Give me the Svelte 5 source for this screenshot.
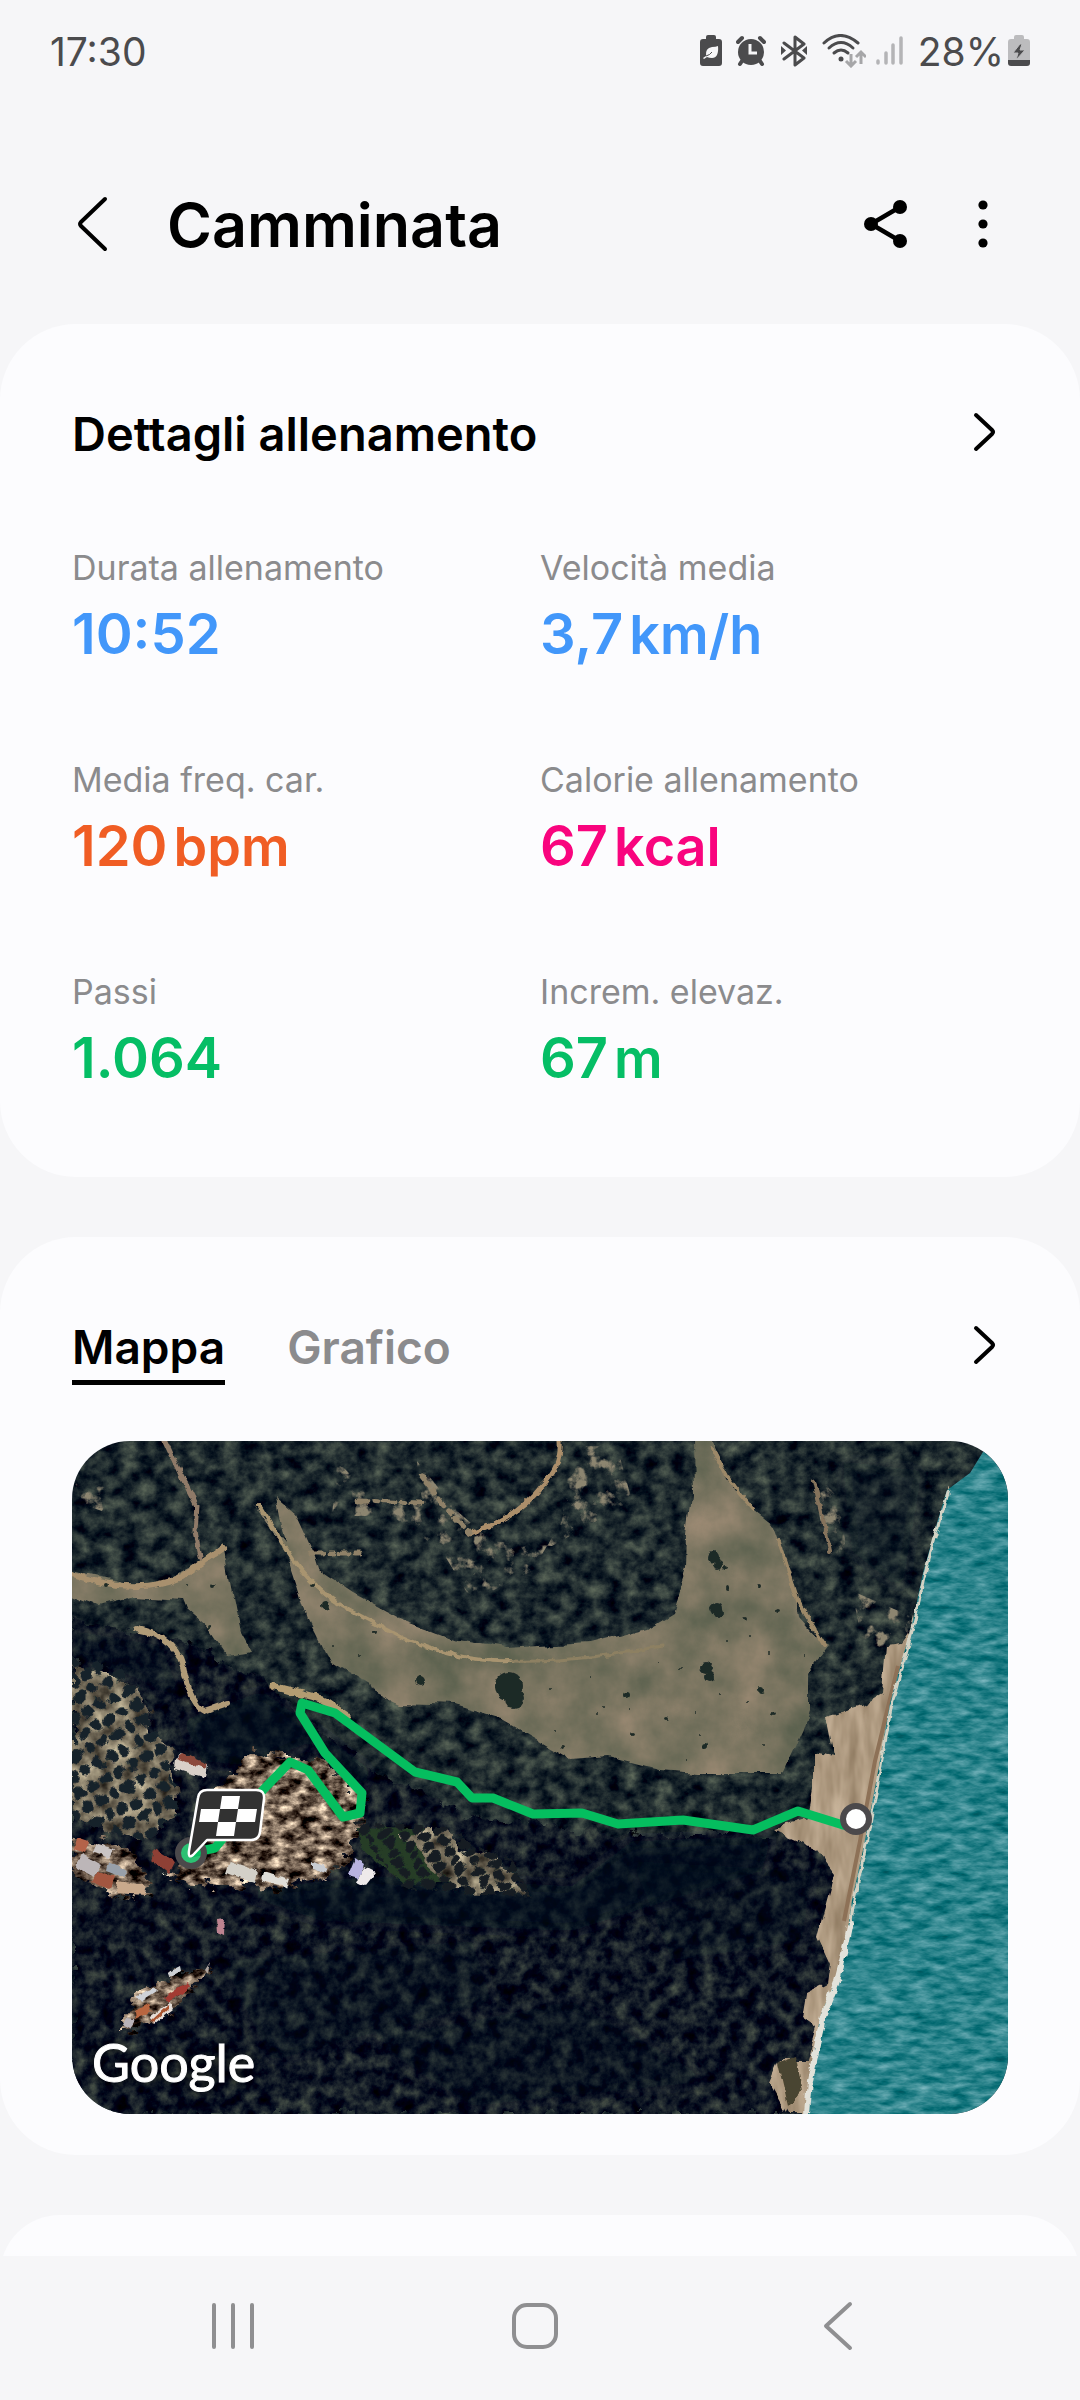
<script lang="ts">
  type Stat = { label: string; value: string; unit?: string; tone: string };

  const stats: Stat[] = [
    { label: 'Durata allenamento', value: '10:52', tone: 'blue' },
    { label: 'Velocità media', value: '3,7', unit: 'km/h', tone: 'blue' },
    { label: 'Media freq. car.', value: '120', unit: 'bpm', tone: 'orange' },
    { label: 'Calorie allenamento', value: '67', unit: 'kcal', tone: 'pink' },
    { label: 'Passi', value: '1.064', tone: 'green' },
    { label: 'Increm. elevaz.', value: '67', unit: 'm', tone: 'green' }
  ];

  const tabs = ['Mappa', 'Grafico'];
  let active = $state('Mappa');

  const route =
    '119,412 143,407 172,372 191,349 218,321 236,329 271,376 288,372 290,352 253,312 228,272 230,262 263,272 343,331 385,341 400,357 421,357 461,373 510,372 546,383 611,379 681,389 726,370 784,388';

  // dark shrubs scattered over the meadow: x, y, radius
  const shrubs = [
    [437, 245, 14], [442, 258, 10], [348, 239, 5], [642, 116, 6], [646, 124, 5],
    [644, 167, 6], [647, 172, 5], [634, 227, 6], [638, 236, 5], [654, 127, 2],
    [632, 305, 3], [554, 254, 3], [689, 249, 3], [560, 293, 2], [706, 170, 2],
    [595, 278, 2], [687, 145, 2], [655, 147, 2], [672, 178, 2], [701, 273, 2],
    [490, 306, 2], [586, 220, 1], [609, 228, 1], [518, 235, 1], [532, 266, 1],
    [525, 273, 1], [558, 269, 1], [624, 272, 1], [648, 252, 1], [676, 261, 1],
    [478, 246, 1], [483, 289, 1], [693, 304, 1], [613, 320, 1], [628, 295, 1],
    [733, 215, 1], [697, 211, 1], [679, 194, 1], [656, 200, 1], [241, 144, 2],
    [253, 164, 4], [302, 191, 2], [262, 205, 1], [288, 215, 1], [141, 145, 2],
    [33, 144, 2], [115, 144, 1], [138, 187, 2]
  ];

  // small roofs: points and colour
  const roofs = [
    ['103,317 110,312 136,324 134,337 102,328', '#d9d0c8'],
    ['104,317 111,312 136,323 134,328', '#8b4a3a'],
    ['5,396 17,400 12,412 3,408', '#b4634a'],
    ['23,402 42,408 37,417 20,411', '#c9c4c4'],
    ['10,413 30,424 22,436 4,426', '#bcb6b8'],
    ['36,420 56,429 52,437 34,430', '#98a0aa'],
    ['26,430 43,436 38,448 20,441', '#a2563f'],
    ['46,440 70,444 73,454 44,452', '#c9a98c'],
    ['82,408 103,421 97,433 79,419', '#8e3f34'],
    ['158,420 186,430 183,442 154,432', '#d3d0c8'],
    ['192,430 217,438 214,446 190,440', '#e0ded8'],
    ['240,420 257,427 254,432 240,428', '#c8ccd2'],
    ['283,417 292,423 287,437 276,434', '#b7b3df'],
    ['292,425 304,431 293,445 285,441', '#eeeaea'],
    ['144,478 153,477 152,494 145,491', '#bd8390'],
    ['93,556 116,541 118,546 97,561', '#a33b33'],
    ['63,570 77,562 80,570 64,578', '#b9663f'],
    ['77,577 98,561 101,568 82,583', '#e4dcd6'],
    ['79,580 96,564 97,567 81,582', '#a8532f'],
    ['65,556 82,546 85,550 68,561', '#cfd2d8'],
    ['96,531 108,525 109,530 98,536', '#cdcfd2'],
    ['55,577 64,578 58,587 52,584', '#b9b3b8'],
    ['133,528 138,520 136,532', '#b0a6a0']
  ];
</script>

{#snippet chevron()}
  <svg class="chevron" width="26" height="44" viewBox="0 0 26 44" aria-hidden="true">
    <path d="M4 5 L20 20 Q22 22 20 24 L4 39" />
  </svg>
{/snippet}

<div class="screen">
  <div class="status">
    <span>17:30</span>
    <div class="status-icons">
      <svg width="22" height="32" viewBox="0 0 22 32" aria-hidden="true">
        <path fill="#4b4b4d" d="M8 0h6q2 0 2 2v2h3q3 0 3 3v21q0 3-3 3H3q-3 0-3-3V7q0-3 3-3h3V2q0-2 2-2z" />
        <path fill="#f6f6f8" d="M18 11q1 12-6 12-3 0-5-1l-3 2-1-1 3-2q-1-8 6-9 4 0 6-1z" />
        <path fill="none" stroke="#4b4b4d" stroke-width="1" d="M6 21q4-1 6-4" />
      </svg>
      <svg width="30" height="32" viewBox="0 0 30 32" aria-hidden="true">
        <circle cx="15" cy="17" r="13" fill="#4b4b4d" />
        <path fill="none" stroke="#4b4b4d" stroke-width="4" stroke-linecap="round" d="M2 7l4-4M28 7l-4-4M6 26l-2 3M24 26l2 3" />
        <path fill="none" stroke="#f6f6f8" stroke-width="3" d="M14 9v9h7" />
      </svg>
      <svg width="28" height="32" viewBox="0 0 28 32" aria-hidden="true">
        <path fill="none" stroke="#4b4b4d" stroke-width="3" stroke-linejoin="round" stroke-linecap="round" d="M4 8l20 15-9 7V2l9 7L4 24" />
        <path fill="#4b4b4d" d="M1 11l5 4.500-5 4.500zM27 11l-5 4.500 5 4.500z" />
      </svg>
      <div class="signals">
        <svg width="44" height="34" viewBox="0 0 44 34" aria-hidden="true">
          <g fill="none" stroke="#4b4b4d" stroke-width="3" stroke-linecap="round">
            <path d="M2 9Q18-6 36 9" />
            <path d="M7 14Q19 3 31 14" />
            <path d="M12 19Q19 13 26 19" />
          </g>
          <circle cx="19" cy="25" r="2.500" fill="#4b4b4d" />
          <path fill="none" stroke="#a6a6a8" stroke-width="3" d="M29 20v11M24 27l5 5 5-5M39 30V19M34 23l5-5 5 5" />
        </svg>
        <svg width="28" height="32" viewBox="0 0 28 32" aria-hidden="true">
          <path stroke="#b4b4b6" stroke-width="3.500" stroke-linecap="round" d="M2 26v2M10 18v10M17 10v18M25 3v25" />
        </svg>
      </div>
      <div class="battery">
        <span>28%</span>
        <svg width="22" height="32" viewBox="0 0 22 32" aria-hidden="true">
          <path fill="#bcbcbe" d="M8 0h6q2 0 2 2v2h3q3 0 3 3v18H0V7q0-3 3-3h3V2q0-2 2-2z" />
          <path fill="#4b4b4d" d="M0 25h22v3q0 3-3 3H3q-3 0-3-3z" />
          <path fill="#4b4b4d" stroke="#bcbcbe" stroke-width="1" d="M12 9l-7 9h5l-2 7 9-10h-5l2-6z" />
        </svg>
      </div>
    </div>
  </div>

  <header>
    <button class="icon" aria-label="Indietro">
      <svg width="32" height="60" viewBox="0 0 32 60" fill="none" stroke="#000" stroke-width="4" stroke-linecap="round">
        <path d="M28 5L4 28Q2 30 4 32L28 55" />
      </svg>
    </button>
    <h1>Camminata</h1>
    <button class="icon share" aria-label="Condividi">
      <svg width="44" height="50" viewBox="0 0 44 50">
        <path d="M36 8L7 25l29 17" fill="none" stroke="#000" stroke-width="4.500" />
        <circle cx="36" cy="8" r="7" /><circle cx="7" cy="25" r="7" /><circle cx="36" cy="42" r="7" />
      </svg>
    </button>
    <button class="icon" aria-label="Altre opzioni">
      <svg width="10" height="50" viewBox="0 0 10 50">
        <circle cx="5" cy="6" r="4.600" /><circle cx="5" cy="25" r="4.600" /><circle cx="5" cy="44" r="4.600" />
      </svg>
    </button>
  </header>

  <main>
    <section class="card details">
      <div class="card-head">
        <h2>Dettagli allenamento</h2>
        <button class="icon" aria-label="Apri dettagli">{@render chevron()}</button>
      </div>
      <dl>
        {#each stats as s}
          <div>
            <dt>{s.label}</dt>
            <dd class={s.tone}>{s.value}{#if s.unit}<span class="unit">{s.unit}</span>{/if}</dd>
          </div>
        {/each}
      </dl>
    </section>

    <section class="card map-card">
      <div class="card-head">
        <div class="tabs" role="tablist">
          {#each tabs as tab}
            <button role="tab" aria-selected={active === tab} class:active={active === tab} onclick={() => (active = tab)}>{tab}</button>
          {/each}
        </div>
        <button class="icon" aria-label="Apri mappa">{@render chevron()}</button>
      </div>

      <div class="map">
        <svg viewBox="0 0 936 673" role="img" aria-label="Percorso della camminata">
          <defs>
            <filter id="woods" x="0" y="0" width="1" height="1" color-interpolation-filters="sRGB">
              <feTurbulence type="fractalNoise" baseFrequency="0.06 0.07" numOctaves="5" seed="4" />
              <feColorMatrix values="0.6 0 0 0 -0.18  0.6 0 0 0 -0.135  0.42 0 0 0 -0.03  0 0 0 0 1" />
            </filter>
            <filter id="darkwoods" x="-0.05" y="-0.05" width="1.1" height="1.1" color-interpolation-filters="sRGB">
              <feTurbulence type="fractalNoise" baseFrequency="0.07" numOctaves="5" seed="9" result="n" />
              <feColorMatrix in="n" values="0.6 0 0 0 -0.24  0.62 0 0 0 -0.22  0.38 0 0 0 -0.05  0 0 0 0 1" result="c" />
              <feDisplacementMap in="SourceGraphic" in2="n" scale="22" xChannelSelector="R" yChannelSelector="G" result="s" />
              <feComposite in="c" in2="s" operator="in" />
            </filter>
            <filter id="grass" x="-0.05" y="-0.05" width="1.1" height="1.1" color-interpolation-filters="sRGB">
              <feTurbulence type="fractalNoise" baseFrequency="0.02" numOctaves="6" seed="3" result="n" />
              <feColorMatrix in="n" values="0.35 0 0 0 0.3  0.22 0 0 0 0.345  0.2 0 0 0 0.275  0 0 0 0 1" result="c" />
              <feDisplacementMap in="SourceGraphic" in2="n" scale="16" xChannelSelector="R" yChannelSelector="G" result="s" />
              <feComposite in="c" in2="s" operator="in" />
            </filter>
            <filter id="sand" x="-0.05" y="-0.05" width="1.1" height="1.1" color-interpolation-filters="sRGB">
              <feTurbulence type="fractalNoise" baseFrequency="0.08 0.02" numOctaves="3" seed="5" result="n" />
              <feColorMatrix in="n" values="0.3 0 0 0 0.53  0.3 0 0 0 0.45  0.3 0 0 0 0.35  0 0 0 0 1" result="c" />
              <feDisplacementMap in="SourceGraphic" in2="n" scale="10" xChannelSelector="R" yChannelSelector="G" result="s" />
              <feComposite in="c" in2="s" operator="in" />
            </filter>
            <filter id="water" x="0" y="0" width="1" height="1" color-interpolation-filters="sRGB">
              <feTurbulence type="fractalNoise" baseFrequency="0.05 0.14" numOctaves="4" seed="7" result="n" />
              <feColorMatrix in="n" values="0.7 0 0 0 -0.18  0.45 0 0 0 0.29  0.45 0 0 0 0.32  0 0 0 0 1" />
              <feComposite in2="SourceGraphic" operator="in" />
            </filter>
            <filter id="village" x="-0.05" y="-0.05" width="1.1" height="1.1" color-interpolation-filters="sRGB">
              <feTurbulence type="fractalNoise" baseFrequency="0.07 0.11" numOctaves="5" seed="2" result="n" />
              <feColorMatrix in="n" values="1.9 0 0 0 -0.5  1.8 0 0 0 -0.52  1.6 0 0 0 -0.48  0 0 0 0 1" result="c" />
              <feDisplacementMap in="SourceGraphic" in2="n" scale="26" xChannelSelector="R" yChannelSelector="G" result="s" />
              <feComposite in="c" in2="s" operator="in" />
            </filter>
            <filter id="soil" x="-0.05" y="-0.05" width="1.1" height="1.1" color-interpolation-filters="sRGB">
              <feTurbulence type="fractalNoise" baseFrequency="0.05" numOctaves="4" seed="8" result="n" />
              <feColorMatrix in="n" values="1 0 0 0 -0.02  0.95 0 0 0 -0.03  0.8 0 0 0 -0.03  0 0 0 0 1" result="c" />
              <feDisplacementMap in="SourceGraphic" in2="n" scale="26" xChannelSelector="R" yChannelSelector="G" result="s" />
              <feComposite in="c" in2="s" operator="in" />
            </filter>
            <filter id="rocks" x="0" y="0" width="1" height="1" color-interpolation-filters="sRGB">
              <feTurbulence type="fractalNoise" baseFrequency="0.06" numOctaves="5" seed="12" />
              <feColorMatrix values="0 0 0 0 0.55  0 0 0 0 0.52  0 0 0 0 0.44  6 0 0 0 -3.3" />
              <feComposite in2="SourceGraphic" operator="in" />
            </filter>
            <filter id="rough" x="-0.1" y="-0.1" width="1.2" height="1.2">
              <feTurbulence type="fractalNoise" baseFrequency="0.12" numOctaves="2" seed="6" result="n" />
              <feDisplacementMap in="SourceGraphic" in2="n" scale="6" xChannelSelector="R" yChannelSelector="G" />
            </filter>
            <filter id="scatter" x="-0.1" y="-0.1" width="1.2" height="1.2">
              <feTurbulence type="fractalNoise" baseFrequency="0.07" numOctaves="4" seed="6" result="n" />
              <feDisplacementMap in="SourceGraphic" in2="n" scale="12" xChannelSelector="R" yChannelSelector="G" />
            </filter>
            <filter id="shade" x="-0.2" y="-0.2" width="1.4" height="1.4">
              <feGaussianBlur stdDeviation="8" />
            </filter>
            <pattern id="olives" width="15" height="17" patternUnits="userSpaceOnUse" patternTransform="rotate(-28)">
              <ellipse cx="7" cy="8" rx="6" ry="6" fill="#18232a" />
            </pattern>
            <pattern id="rows" width="17" height="11" patternUnits="userSpaceOnUse" patternTransform="rotate(-26)">
              <ellipse cx="7" cy="5" rx="6" ry="5" fill="#151d22" />
            </pattern>
          </defs>

          <rect width="936" height="673" filter="url(#woods)" />
          <path filter="url(#darkwoods)" d="M0 180L100 195 190 240 300 330 400 375 480 385 600 395 700 395 735 380 780 420 770 560 730 673H0z" />
          <path fill="#04091a" opacity="0.6" filter="url(#shade)" d="M110 280L190 250 240 285 300 330 290 350 240 300 180 325 130 320zM160 450L300 435 500 445 560 400 700 395 690 430 500 490 250 480z" />
          <path fill="#04091a" opacity="0.3" filter="url(#shade)" d="M5 190L90 205 110 260 60 235 0 215zM150 520L400 500 420 560 200 620zM300 600L500 560 640 640 400 665zM560 420L740 430 730 500 600 520zM770 20L850 30 830 150 780 110z" />

          <path filter="url(#rocks)" d="M265 20L300 55 350 60 345 20 385 70 420 100 480 105 560 60 545 5 500 5 490 80 460 130 400 160 370 110 320 75 260 75zM740 30L770 60 775 130 750 90zM780 150L850 180 820 210 790 200zM0 30L40 50 30 70 0 60z" />

          <path filter="url(#grass)" d="M620 0L638 0 655 36 681 69 703 86 723 142 728 176 755 206 735 232 735 266 728 289 708 332 628 332 585 329 535 316 501 319 431 279 381 264 331 262 298 246 258 222 238 182 228 149 215 109 198 82 185 62 215 100 205 52 225 69 245 112 251 132 281 152 331 179 385 199 431 207 518 202 578 186 601 172 615 129 616 92 621 56z" />
          <path filter="url(#grass)" d="M0 132L65 146 98 139 125 126 151 102 158 139 168 189 178 207 153 211 138 189 115 169 111 159 65 156 25 166 0 156z" />

          <g fill="none" stroke-linecap="round" stroke-linejoin="round" filter="url(#rough)">
            <path stroke="#a8906e" stroke-width="6" d="M0 133Q65 156 110 136L151 107" />
            <path stroke="#8f7a67" stroke-width="5" d="M128 116L123 90 125 65 108 32 93 0" />
            <path stroke="#a8946f" stroke-width="4" d="M187 64L215 109Q240 150 281 171L331 197Q390 222 440 220" />
            <path stroke="#8d8062" stroke-width="3" d="M440 220Q500 222 590 205" />
            <path stroke="#ab8e6b" stroke-width="5" d="M398 92Q445 78 470 45 490 25 488 0" />
            <path stroke="#8f8167" stroke-width="5" stroke-dasharray="10 7 4 6" d="M350 35L372 65 398 92M285 60L350 62M240 112L290 112" />
            <path stroke="#9c8868" stroke-width="4" d="M640 8L655 36 681 68M707 100L726 160 752 204" />
            <path stroke="#b09b78" stroke-width="6" d="M64 188Q108 195 113 235 122 266 132 270L156 262" />
            <path stroke="#b39c72" stroke-width="7" d="M200 245L250 258 275 275" />
            <path stroke="#85735c" stroke-width="4" d="M742 40L750 75 758 110" />
          </g>

          <path filter="url(#soil)" d="M0 222L41 229 68 252 82 290 100 312 105 370 75 400 0 372z" />
          <path fill="url(#olives)" filter="url(#scatter)" d="M0 216L41 225 70 250 95 312 108 370 75 402 0 380z" />
          <path filter="url(#village)" d="M178 309L215 318 250 318 291 352 291 380 268 430 215 446 98 442 110 415 150 340z" />
          <path filter="url(#village)" d="M0 398L55 405 80 450 40 456 0 432zM60 560L105 530 138 530 95 575 50 590z" />
          <path fill="#263d28" filter="url(#rough)" d="M285 386L365 389 400 440 331 442 288 406z" />
          <path filter="url(#soil)" d="M330 388L365 389 431 422 455 452 388 449 355 425z" />
          <path fill="url(#rows)" filter="url(#scatter)" d="M280 380L368 385 440 420 460 456 330 448z" />

          <g filter="url(#rough)">
            {#each roofs as [points, fill]}
              <polygon {points} {fill} />
            {/each}
          </g>
          <g fill="#1f2b28" filter="url(#rough)">
            {#each shrubs as [cx, cy, r]}
              <circle {cx} {cy} {r} />
            {/each}
          </g>

          <path filter="url(#sand)" d="M878 45L868 80 852 140 841 186 830 202 815 204 811 252 788 266 755 276 763 316 741 312 741 349 736 376 701 386 715 396 745 409 763 432 751 476 746 496 758 522 755 542 735 552 731 576 745 586 735 619 708 619 698 642 715 673H745L770 560 800 409 825 262 870 100 885 50z" />
          <path fill="none" stroke="#8d7157" stroke-width="4" d="M826 225L803 320 788 400 772 480" />
          <path fill="#4a4430" filter="url(#rough)" d="M706 622L724 616 730 650 716 665z" />
          <path filter="url(#water)" d="M911 11L898 32 875 49 865 82 851 132 841 179 831 216 818 262 805 336 791 409 780 459 775 496 765 536 748 576 741 622 735 673H936V0H914z" />
          <path fill="none" stroke="#d2d2c4" stroke-width="3" filter="url(#rough)" d="M877 49L867 82 853 132 843 179 833 216 820 262 807 336 793 409 782 459 777 496" />
          <path fill="none" stroke="#e2e2da" stroke-width="6" filter="url(#rough)" d="M779 480L775 500 765 540 751 576 746 600 738 640 735 673" />

          <circle cx="119" cy="412" r="13" fill="#2cc173" />
          <polyline points={route} fill="none" stroke="#05be5f" stroke-width="9" stroke-linejoin="round" />
          <circle cx="784" cy="378" r="13" fill="#fff" stroke="#4b494b" stroke-width="6" />
          <circle cx="119" cy="412" r="13" fill="none" stroke="#4b494b" stroke-width="6" />
          <path fill="#323232" stroke="#fff" stroke-width="2.500" stroke-linejoin="round" d="M135 349H184Q193 349 192 358L188 391Q187 399 179 399H135L121 414Q116 418 117 410L126 357Q127 349 135 349z" />
          <path fill="#fff" d="M150 355h18l-2 13h-18zM129 368h19l-2 13h-19zM166 368h19l-2 13h-19zM146 381h18l-2 14h-18z" />
        </svg>
        <span class="brand">Google</span>
      </div>
    </section>

    <section class="card next"></section>
  </main>

  <nav>
    <button class="icon" aria-label="Recenti">
      <svg width="50" height="50" viewBox="0 0 50 50" stroke="#8f8f91" stroke-width="4" stroke-linecap="round">
        <path d="M6 4v42M25 4v42M44 4v42" />
      </svg>
    </button>
    <button class="icon" aria-label="Home">
      <svg width="50" height="50" viewBox="0 0 50 50" fill="none" stroke="#8f8f91" stroke-width="4">
        <rect x="4" y="4" width="42" height="42" rx="13" />
      </svg>
    </button>
    <button class="icon" aria-label="Indietro">
      <svg width="50" height="50" viewBox="0 0 50 50" fill="none" stroke="#8f8f91" stroke-width="4" stroke-linecap="round" stroke-linejoin="round">
        <path d="M37 3L13 25l24 22" />
      </svg>
    </button>
  </nav>
</div>

<style>
  :global(body) {
    margin: 0;
    background: #f6f6f8;
  }

  .screen {
    min-height: 100vh;
    display: flex;
    flex-direction: column;
    font-family: Inter, 'Open Sans', sans-serif;
    color: #000;
  }

  svg {
    display: block;
    flex: none;
  }

  button {
    font: inherit;
    color: inherit;
    background: none;
    border: none;
    padding: 0;
    cursor: pointer;
  }

  .status {
    display: flex;
    justify-content: space-between;
    align-items: center;
    height: 102px;
    padding: 0 50px;
    font-size: 39px;
    color: #4b4b4d;
  }

  .status-icons {
    display: flex;
    align-items: center;
    gap: 14px;
  }

  .signals {
    display: flex;
    align-items: center;
    gap: 10px;
  }

  .battery {
    display: flex;
    align-items: center;
    gap: 4px;
  }

  header {
    display: flex;
    align-items: center;
    height: 200px;
    padding: 22px 92px 0 77px;
  }

  h1 {
    flex: 1;
    margin: 0 0 0 58px;
    padding-top: 2px;
    font-size: 61px;
    line-height: 80px;
    font-weight: 600;
  }

  .share {
    margin-right: 70px;
  }

  main {
    flex: 1;
    display: flex;
    flex-direction: column;
    gap: 60px;
    overflow: hidden;
  }

  .card {
    background: #fcfcfe;
    border-radius: 76px;
    padding: 80px 72px 0;
  }

  .details {
    padding-bottom: 83px;
  }

  .map-card {
    padding-bottom: 41px;
  }

  /* runs on below the navigation bar */
  .next {
    flex: 1;
    min-height: 120px;
    margin-bottom: -79px;
    padding: 0;
  }

  .card-head {
    display: flex;
    justify-content: space-between;
    align-items: flex-start;
    padding-right: 10px;
  }

  .card-head .icon {
    padding: 6px 0;
  }

  .chevron {
    fill: none;
    stroke: #000;
    stroke-width: 4;
    stroke-linecap: round;
  }

  h2 {
    margin: 0;
    font-size: 47px;
    line-height: 60px;
    font-weight: 600;
  }

  dl {
    display: grid;
    grid-template-columns: 1fr 1fr;
    row-gap: 86px;
    margin: 80px 0 0;
  }

  dt {
    font-size: 34px;
    line-height: 48px;
    color: #8b8b8d;
  }

  dd {
    margin: 6px 0 0;
    font-size: 56px;
    line-height: 72px;
    font-weight: 600;
  }

  .unit {
    margin-left: 6px;
    font-size: 54px;
    line-height: 1;
  }

  .blue { color: #4297fa; }
  .orange { color: #f05d24; }
  .pink { color: #f9047e; }
  .green { color: #05be65; }

  .tabs {
    display: flex;
    gap: 62px;
  }

  .tabs button {
    font-size: 46px;
    line-height: 60px;
    font-weight: 600;
    color: #8b8b8d;
    padding-bottom: 3px;
    border-bottom: 5px solid transparent;
  }

  .tabs .active {
    color: #000;
    border-color: #000;
  }

  .map {
    position: relative;
    margin-top: 56px;
    border-radius: 58px;
    overflow: hidden;
  }

  .map svg {
    width: 100%;
    height: auto;
  }

  .brand {
    position: absolute;
    left: 20px;
    bottom: 20px;
    font-family: Lato, sans-serif;
    font-size: 52px;
    line-height: 64px;
    color: #fff;
    -webkit-text-stroke: 1px #fff;
    text-shadow: 0 0 8px #000;
  }

  nav {
    display: grid;
    grid-template-columns: repeat(3, 1fr);
    justify-items: center;
    align-items: center;
    height: 144px;
    padding: 0 91px 4px 82px;
    box-sizing: border-box;
  }
</style>
